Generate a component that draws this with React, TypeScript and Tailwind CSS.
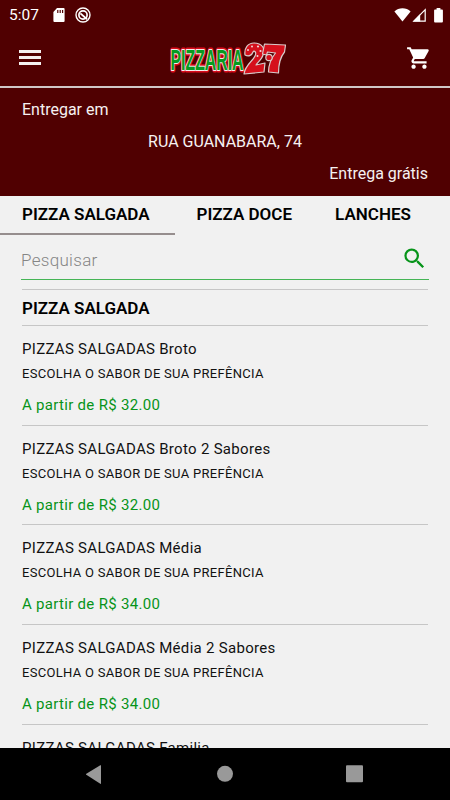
const categories = ["PIZZA SALGADA", "PIZZA DOCE", "LANCHES"];

const products = [
  { name: "PIZZAS SALGADAS Broto", price: "32.00" },
  { name: "PIZZAS SALGADAS Broto 2 Sabores", price: "32.00" },
  { name: "PIZZAS SALGADAS Média", price: "34.00" },
  { name: "PIZZAS SALGADAS Média 2 Sabores", price: "34.00" },
  { name: "PIZZAS SALGADAS Familia", price: "42.00" },
];

function StatusBar() {
  return (
    <div className="flex h-7 items-center pl-[9px] pr-[7px] text-white">
      <span className="text-[15.5px] leading-7">5:07</span>
      <svg className="ml-[14px] h-[14px] w-[12px]" viewBox="0 0 12 14" fill="currentColor">
        <path
          fillRule="evenodd"
          d="M4 0h6.6Q11.6 0 11.6 1v12q0 1-1 1H1.4q-1 0-1-1V4ZM4.2 2v3h1.2V2Zm2.4 0v3h1.2V2ZM9 2v3h1.2V2Z"
        />
      </svg>
      <svg className="ml-[10px] size-4" viewBox="0 0 16 16" fill="none" stroke="currentColor">
        <circle cx="8" cy="8" r="7" strokeWidth="1.4" />
        <circle cx="8" cy="8" r="4.1" strokeWidth="1.7" />
        <path d="M5.4 6.4 12 12.2" strokeWidth="1.8" />
      </svg>
      <div className="ml-auto flex items-center">
        <svg className="h-[14px] w-[17px]" viewBox="0 0 17 14" fill="currentColor">
          <path d="M8.5 13.6.4 3.4Q3.8.3 8.5.3t8.1 3.1Z" />
        </svg>
        <svg className="ml-px h-[14px] w-[14px]" viewBox="0 0 14 14">
          <path d="M1.8 13.2 13.2 1.6v11.6Z" fill="none" stroke="white" strokeWidth="1.2" />
          <path d="M8.2 6v7.5H1Z" fill="white" />
        </svg>
        <svg className="ml-[8px] h-[15px] w-[9px]" viewBox="0 0 9 15" fill="currentColor">
          <path d="M2.6 0h3.8v1.6H8q.9 0 .9.9v11q0 .9-.9.9H1q-.9 0-.9-.9v-11q0-.9.9-.9h1.6Z" />
        </svg>
      </div>
    </div>
  );
}

function Logo() {
  return (
    <svg
      className="h-[36px] w-[120px]"
      viewBox="0 0 120 36"
      fontFamily="'Liberation Sans Narrow', 'Liberation Sans', sans-serif"
      fontWeight="bold"
      strokeLinejoin="round"
    >
      <g fontSize="29" paintOrder="stroke">
        <text x="4.5" y="29.5" textLength="73" lengthAdjust="spacingAndGlyphs" fill="#e01020" stroke="#d80d1d" strokeWidth="5">
          PIZZARIA
        </text>
        <text x="4.5" y="29.5" textLength="73" lengthAdjust="spacingAndGlyphs" fill="#089a20" stroke="#f5ecec" strokeWidth="2">
          PIZZARIA
        </text>
      </g>
      <g fill="#d5101c" stroke="#d9cccc" strokeWidth="1.2">
        <path d="M79 15c-1-7 3-12 9-12 8 0 12 6 9 12-1 4-5 7-7 10l9-2-1 9-20 2c1-9 9-13 11-18 2-4-1-6-2-4-1 3-4 5-8 3Z" />
        <path d="m98.500 4 21 1-1 7c-5 6-6 12-6 21l-10-1c0-9 3-14 7-19l-8-1-1 3-4-1Z" />
        <circle cx="103" cy="17.500" r="3.200" />
      </g>
      <g fill="#f0d6d6">
        <circle cx="82" cy="10" r="1" />
        <circle cx="86" cy="6.500" r="1" />
        <circle cx="92" cy="6.500" r="1.100" />
        <circle cx="94.500" cy="11" r="1.100" />
        <circle cx="91.500" cy="16" r="1" />
      </g>
    </svg>
  );
}

function AppBar() {
  return (
    <div className="grid h-[59px] grid-cols-[1fr_auto_1fr] items-center border-b-2 border-[#d0c6c6] pl-[19px] pr-[18px]">
      <button className="flex w-[22px] flex-col gap-[3px]" aria-label="Menu">
        <span className="h-[3px] bg-[#f4f0f0]" />
        <span className="h-[3px] bg-[#f4f0f0]" />
        <span className="h-[3px] bg-[#f4f0f0]" />
      </button>
      <Logo />
      <button className="justify-self-end" aria-label="Carrinho">
        <svg className="size-[26px]" viewBox="0 0 24 24" fill="white">
          <path d="M7 18c-1.100 0-1.990.9-1.990 2S5.900 22 7 22s2-.9 2-2-.9-2-2-2zM1 2v2h2l3.600 7.590-1.350 2.450c-.16.28-.25.61-.25.96 0 1.100.9 2 2 2h12v-2H7.420c-.14 0-.25-.11-.25-.25l.03-.12.9-1.630h7.450c.75 0 1.410-.41 1.750-1.030l3.580-6.490A1.003 1.003 0 0 0 20 4H5.210l-.94-2H1zm16 16c-1.100 0-1.990.9-1.990 2s.89 2 1.990 2 2-.9 2-2-.9-2-2-2z" />
        </svg>
      </button>
    </div>
  );
}

function Delivery() {
  return (
    <div className="flex h-[107px] flex-col px-[22px] pt-[6px] text-[16px] leading-8 text-[#f6f1f1]">
      <p>Entregar em</p>
      <p className="text-center">RUA GUANABARA, 74</p>
      <p className="text-right">Entrega grátis</p>
    </div>
  );
}

function Tabs() {
  return (
    <div className="flex h-[39px] text-[17px] font-semibold text-black">
      {categories.map((c, i) => (
        <div
          key={c}
          className={
            i === 0
              ? "w-[175px] shrink-0 border-b-2 border-[#968e8e] pl-[22px] leading-[37px]"
              : "shrink-0 px-[21.500px] leading-[37px]"
          }
        >
          {c}
        </div>
      ))}
    </div>
  );
}

function Search() {
  return (
    <div className="mx-[21px] flex h-[45px] items-center justify-between border-b border-[#45b556] pt-[7px]">
      <span className="text-[17px] font-light tracking-[0.3px] text-[#858585]">Pesquisar</span>
      <svg className="mb-[5px] mr-px size-[27px]" viewBox="0 0 24 24" fill="#07941a">
        <path d="M15.500 14h-.79l-.28-.27A6.471 6.471 0 0 0 16 9.500 6.500 6.500 0 1 0 9.500 16c1.610 0 3.090-.59 4.230-1.570l.27.28v.79l5 4.990L20.490 19l-4.990-5zm-6 0C7.010 14 5 11.990 5 9.500S7.010 5 9.500 5 14 7.010 14 9.500 11.990 14 9.500 14z" />
      </svg>
    </div>
  );
}

function Product({ name, price }: { name: string; price: string }) {
  return (
    <li className="h-[99.700px] shrink-0 border-b border-[#c6c6c6] pt-[11px]">
      <p className="text-[15px] leading-6 tracking-[0.3px] text-[#111]">{name}</p>
      <p className="text-[13px] leading-[26px] tracking-[0.3px] text-[#111]">ESCOLHA O SABOR DE SUA PREFÊNCIA</p>
      <p className="mt-[6px] text-[15px] leading-6 tracking-[0.3px] text-[#07941a]">A partir de R$ {price}</p>
    </li>
  );
}

function NavBar() {
  return (
    <div className="flex h-[52px] shrink-0 items-center bg-black">
      <svg className="h-[52px] w-[450px]" viewBox="0 0 450 52" fill="#999">
        <path d="M101 17.500v18q0 .7-.7.3L86.300 26.700q-.7-.5 0-1L100.300 17.200q.7-.4.700.3Z" />
        <circle cx="225" cy="25.800" r="8" />
        <rect x="346" y="17.300" width="17" height="17" rx="1" />
      </svg>
    </div>
  );
}

export default function App() {
  return (
    <div className="flex h-[800px] w-[450px] flex-col overflow-hidden bg-[#f1f1f1] font-[Roboto,sans-serif]">
      <header className="h-[196px] shrink-0 bg-[#500001] pt-px">
        <StatusBar />
        <AppBar />
        <Delivery />
      </header>
      <main className="min-h-0 flex-1 overflow-hidden">
        <Tabs />
        <Search />
        <section className="mx-[22px] mt-[9px] border-t border-[#c6c6c6]">
          <h2 className="h-9 border-b border-[#c6c6c6] text-[17px] font-semibold leading-[37px] text-black">PIZZA SALGADA</h2>
          <ul>
            {products.map((p) => (
              <Product key={p.name} name={p.name} price={p.price} />
            ))}
          </ul>
        </section>
      </main>
      <NavBar />
    </div>
  );
}
